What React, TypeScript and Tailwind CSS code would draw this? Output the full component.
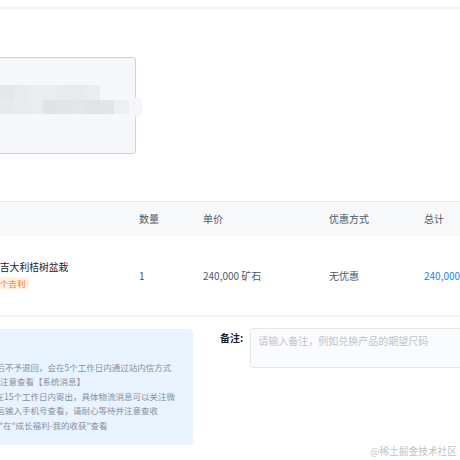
const cols = ["w-[199px]", "w-[64px]", "w-[126px]", "w-[95px]", "flex-1"];

const smearTop = ["#e6e7ea", "#e9eaec", "#ecedef", "#ebecee", "#eaebed", "#e9eaec", "#ebecee"];
const smearBottom = ["#e8e9eb", "#eaebed", "#ebecee", "#e1e2e5", "#e3e4e7", "#e4e5e8", "#e2e3e6", "#e3e4e7", "#eeeff1"];

const notes = [
  { text: "收后不予退回，会在5个工作日内通过站内信方式", cls: "-ml-[12px]" },
  { text: "须注意查看【系统消息】", cls: "-ml-[8.5px]" },
  { text: "在15个工作日内寄出，具体物流消息可以关注微", cls: "-ml-[4.5px]" },
  { text: "递运输入手机号查看，请耐心等待并注意查收", cls: "-ml-[12px]" },
  { text: "可\"在\"成长福利-我的收获\"查看", cls: "-ml-[9.5px]" },
];

export default function App() {
  return (
    <div className="relative h-[460px] w-[460px] overflow-hidden bg-white font-['Noto_Sans_CJK_SC',sans-serif] text-[#4e5969]">
      <div className="pt-[7px]">
        <div className="h-[2px] bg-[#f2f3f5]" />
      </div>

      {/* address card, blurred */}
      <div className="relative -ml-[40px] mt-[48px] h-[97px] w-[176px] rounded-[3px] border border-[#bcd5f8] bg-[#f5f7fa] pl-[39px] pt-[27px]">
        <div className="flex blur-[0.6px]">
          {smearTop.map((c, i) => (
            <div key={i} className="h-[15px] w-[14.3px]" style={{ background: c }} />
          ))}
        </div>
        <div className="flex blur-[0.6px]">
          {smearBottom.map((c, i) => (
            <div key={i} className="h-[14px] w-[14.3px]" style={{ background: c }} />
          ))}
        </div>
        <div className="absolute -right-[7px] top-[39px] h-[20px] w-[9px] rounded-full bg-[#f4f6f9]" />
      </div>

      {/* table */}
      <div className="-ml-[60px] mt-[47px] w-[560px]">
        <div className="flex h-[35px] items-center border-t border-[#e8eaee] bg-[#f7f8fa] text-[10px] leading-[14px]">
          <div className={cols[0]} />
          <div className={cols[1]}>数量</div>
          <div className={cols[2]}>单价</div>
          <div className={cols[3]}>优惠方式</div>
          <div className={cols[4]}>总计</div>
        </div>
        <div className="flex h-[81px] items-center border-b-2 border-[#f2f3f5] text-[10px] leading-[14px]">
          <div className={`${cols[0]} mb-[2px] flex flex-col items-start pl-[50px]`}>
            <div className="text-[9.8px] text-[#1d2129]">大吉大利桔树盆栽</div>
            <div className="-ml-[1.5px] mt-[3px] bg-[#fff3e8] px-[3px] text-[8.5px] leading-[13px] text-[#ff7d00]">
              一个吉利
            </div>
          </div>
          <div className={cols[1]}>1</div>
          <div className={cols[2]}>240,000 矿石</div>
          <div className={cols[3]}>无优惠</div>
          <div className={`${cols[4]} text-[#1e80ff]`}>240,000 矿石</div>
        </div>
      </div>

      {/* notes + remark */}
      <div className="mt-[12px] flex items-start">
        <div className="-ml-[40px] h-[116px] w-[233px] shrink-0 overflow-hidden rounded-[4px] bg-[#e8f3ff] pl-[40px] pt-[31px] text-[8.5px] leading-[14.4px] text-[#86909c]">
          {notes.map((n) => (
            <div key={n.text} className={`${n.cls} whitespace-nowrap`}>
              {n.text}
            </div>
          ))}
        </div>
        <div className="ml-[27px] mt-[2px] shrink-0 text-[10px] font-bold leading-[14px] text-[#1d2129]">备注:</div>
        <textarea
          className="-mt-[1px] ml-[7px] h-[40px] w-[260px] shrink-0 resize-none rounded-[3px] border border-[#e5e6eb] bg-[#fafbfc] px-[7px] pt-[5px] text-[10px] leading-[14px] outline-none placeholder:text-[#c0c4cc]"
          placeholder="请输入备注，例如兑换产品的期望尺码"
        />
      </div>

      <div className="absolute bottom-[2px] right-[3px] text-[9.7px] leading-[14px] text-[#c2c2c2]">@稀土掘金技术社区</div>
    </div>
  );
}
